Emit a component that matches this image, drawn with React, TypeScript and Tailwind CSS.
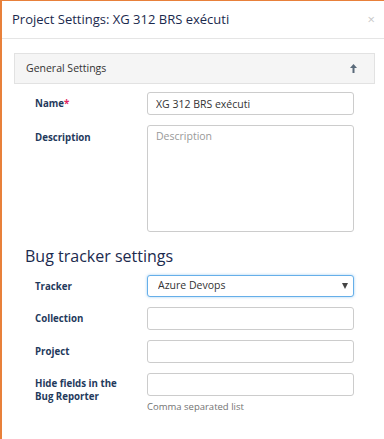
import { useState } from "react";

const font = { fontFamily: '"Open Sans", "Liberation Sans", sans-serif' };

function Row({ label, required, children, top }: { label: string; required?: boolean; children: React.ReactNode; top?: boolean }) {
    return (
        <div className={`flex ${top ? "items-start" : "items-center"}`}>
            <div className={`w-[112px] pl-[33px] box-content text-[9.7px] font-bold leading-[13px] text-[#1f3a5c] ${top ? "pt-[6px]" : ""}`}>
                {label}
                {required && <span className="text-[#e0245e]">*</span>}
            </div>
            <div className="w-[207px]">{children}</div>
        </div>
    );
}

export default function App() {
    const [name, setName] = useState("XG 312 BRS exécuti");
    const [description, setDescription] = useState("");
    const [tracker, setTracker] = useState("Azure Devops");

    const inputClass = "block w-full h-[23px] px-[8px] border border-[#cccccc] rounded-[3px] text-[10.5px] text-[#333] outline-none bg-white";

    return (
        <div style={font} className="w-[384px] h-[439px] overflow-hidden bg-white border-t border-l-2 border-[#e8803a]">
            <div className="h-[38px] flex items-center justify-between pl-[10px] pr-[9px] border-b border-[#e5e5e5]">
                <span className="text-[13px] text-[#1b2a4e]">Project Settings: XG 312 BRS exécuti</span>
                <span className="text-[13px] text-[#c8c8c8] leading-none">×</span>
            </div>

            <div className="pl-[12px] pr-[9px] pt-[14px]">
                <div className="h-[31px] flex items-center justify-between px-[11px] bg-[#f5f5f5] border border-[#e2e2e2]">
                    <span className="text-[10.5px] text-[#333]">General Settings</span>
                    <svg width="9" height="11" viewBox="0 0 9 11" className="mr-[5px]">
                        <path d="M4.5 1 L1 5 L3.5 5 L3.5 10 L5.5 10 L5.5 5 L8 5 Z" fill="#5a6a7a" />
                    </svg>
                </div>
            </div>

            <div className="flex flex-col gap-[10px] pt-[8px]">
                <Row label="Name" required>
                    <input className={inputClass} value={name} onChange={(e) => setName(e.target.value)} />
                </Row>
                <Row label="Description" top>
                    <textarea
                        className="block w-full h-[107px] px-[8px] py-[3px] border border-[#cccccc] rounded-[3px] text-[10.5px] text-[#333] outline-none resize-none placeholder:text-[#999]"
                        placeholder="Description"
                        value={description}
                        onChange={(e) => setDescription(e.target.value)}
                    />
                </Row>
            </div>

            <div className="pl-[23px] pt-[13px] text-[16px] leading-[22px] text-[#1b2a4e]">Bug tracker settings</div>

            <div className="flex flex-col gap-[10px] pt-[8px]">
                <Row label="Tracker">
                    <div className="relative">
                        <select
                            className="block w-full h-[22px] pl-[10px] pr-[20px] border border-[#66afe9] rounded-[3px] text-[10.5px] text-[#333] bg-white outline-none appearance-none shadow-[0_0_3px_rgba(102,175,233,0.6)]"
                            value={tracker}
                            onChange={(e) => setTracker(e.target.value)}
                        >
                            <option>Azure Devops</option>
                            <option>Jira</option>
                            <option>GitHub</option>
                        </select>
                        <span className="absolute right-[6px] top-[8px] w-0 h-0 border-l-[3.5px] border-r-[3.5px] border-t-[6px] border-l-transparent border-r-transparent border-t-[#444]" />
                    </div>
                </Row>
                <Row label="Collection">
                    <input className={inputClass} />
                </Row>
                <Row label="Project">
                    <input className={inputClass} />
                </Row>
                <div className="flex items-start">
                    <div className="w-[112px] pl-[33px] box-content pt-[4px]">
                        <div className="w-[86px] text-[9.7px] font-bold leading-[13px] text-[#1f3a5c]">Hide fields in the Bug Reporter</div>
                    </div>
                    <div className="w-[207px]">
                        <input className={inputClass} />
                        <div className="text-[9.5px] leading-[13px] text-[#737373] mt-[4px]">Comma separated list</div>
                    </div>
                </div>
            </div>

            <div className="mt-[26px] ml-[12px] mr-[11px] border-t border-[#e2e2e2]" />
        </div>
    );
}
